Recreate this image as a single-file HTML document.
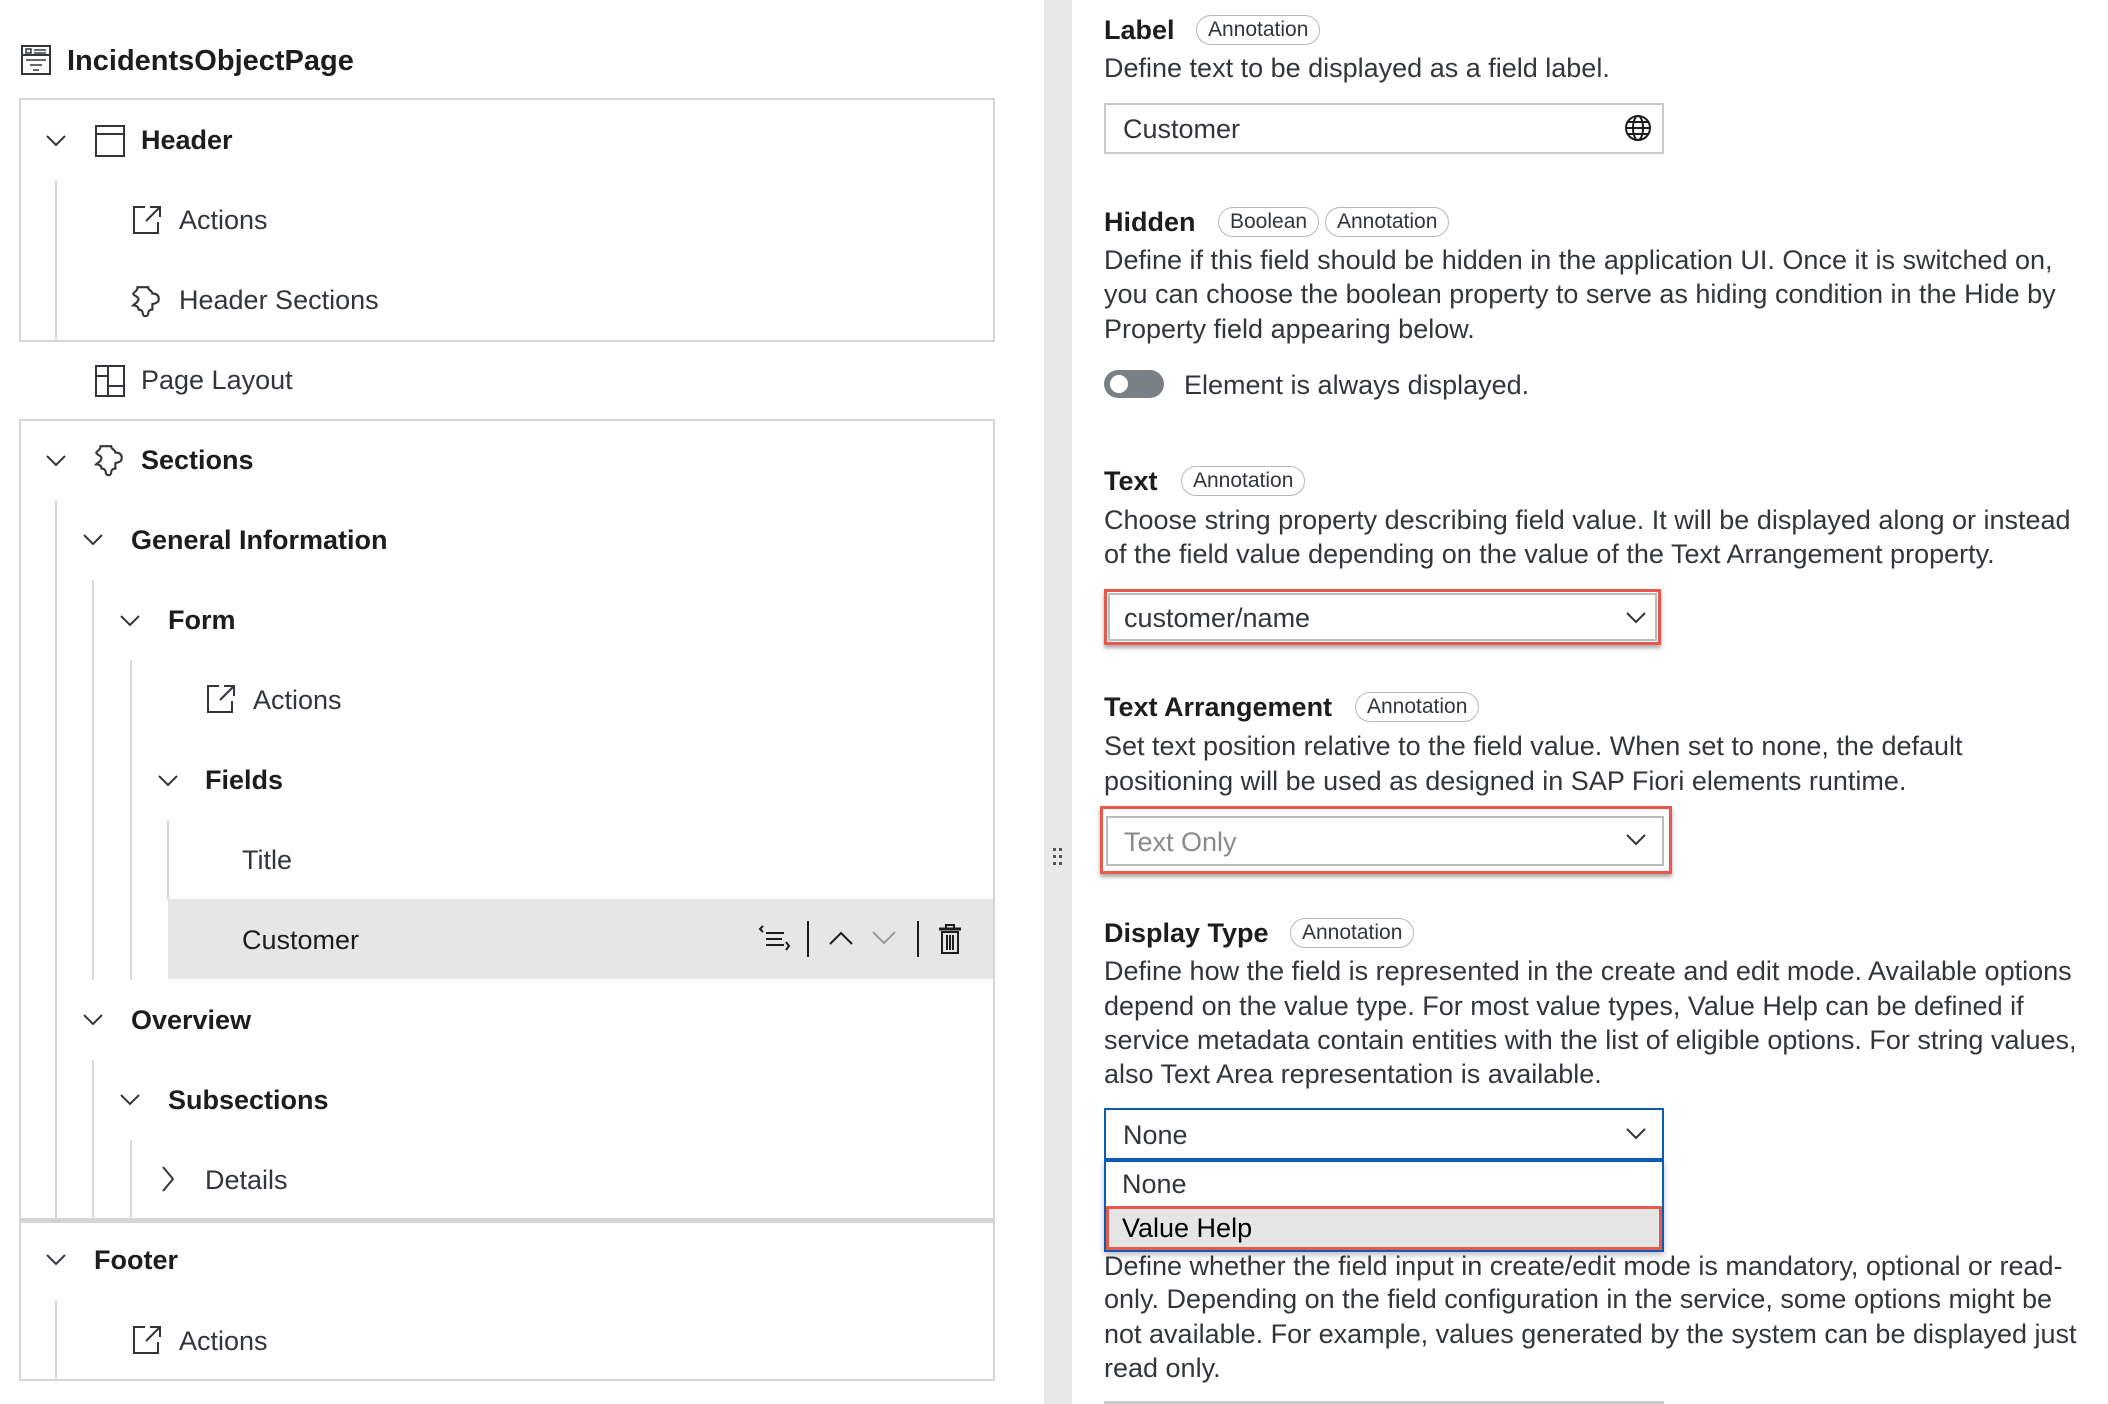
<!DOCTYPE html>
<html><head><meta charset="utf-8"><style>
*{margin:0;padding:0;box-sizing:border-box}
body{width:2108px;height:1404px;overflow:hidden;background:#fff;font-family:"Liberation Sans",Arial,sans-serif;color:#32363a;position:relative}
.a{position:absolute;white-space:nowrap}
.t{position:absolute;white-space:nowrap;font-size:27px;line-height:40px;height:40px}
.b{font-weight:bold}
.box{position:absolute;border:2px solid #d5d5d5}
.vl{position:absolute;width:2px;background:#d9d9d9}
.chev{position:absolute;width:24px;height:24px}
.h{position:absolute;font-size:27px;font-weight:bold;line-height:34px;color:#1d1d1d}
.pill{position:absolute;border:1.5px solid #b8b8b8;border-radius:15px;font-size:21px;line-height:28px;padding:0 11px;color:#32363a}
.d{position:absolute;font-size:27px;line-height:34px;color:#32363a;white-space:nowrap}
.inp{position:absolute;border:2px solid #c9c9c9;background:#fff;font-size:27px;line-height:48px;padding-left:17px}
.red{position:absolute;border:3px solid #e8584d;box-shadow:0 3px 4px rgba(0,0,0,.35)}
</style></head><body>

<svg class="a" style="left:20px;top:44px" width="32" height="32" viewBox="0 0 32 32" fill="none" stroke="#32363a" stroke-width="2"><rect x="2" y="2" width="28" height="28"/><line x1="2" y1="11" x2="30" y2="11"/><rect x="6" y="5" width="5" height="4" stroke-width="1.5"/><line x1="14" y1="6" x2="26" y2="6" stroke-width="1.5"/><line x1="14" y1="9" x2="26" y2="9" stroke-width="1.5"/><line x1="6" y1="16" x2="26" y2="16" stroke-width="1.5"/><line x1="10" y1="21" x2="22" y2="21" stroke-width="1.5"/><line x1="13" y1="26" x2="19" y2="26" stroke-width="1.5"/></svg>
<div class="t b" style="left:67px;top:41px;font-size:29px;color:#1d1d1d">IncidentsObjectPage</div>

<div class="box" style="left:19px;top:98px;width:976px;height:244px"></div>
<div class="box" style="left:19px;top:419px;width:976px;height:801px"></div>
<div class="box" style="left:19px;top:1219px;width:976px;height:162px;border-top-width:4px"></div>

<div class="a" style="left:168px;top:899px;width:825px;height:80px;background:#e6e6e6"></div>

<div class="vl" style="left:55px;top:180px;height:160px"></div>
<div class="vl" style="left:55px;top:500px;height:719px"></div>
<div class="vl" style="left:92px;top:580px;height:400px"></div>
<div class="vl" style="left:130px;top:660px;height:320px"></div>
<div class="vl" style="left:167px;top:820px;height:80px"></div>
<div class="vl" style="left:92px;top:1060px;height:159px"></div>
<div class="vl" style="left:130px;top:1140px;height:79px"></div>
<div class="vl" style="left:55px;top:1300px;height:80px"></div>

<svg width="0" height="0" style="position:absolute"><defs>
<symbol id="cd" viewBox="0 0 24 24"><path d="M3 8 L12 17 L21 8" fill="none" stroke="#32363a" stroke-width="2"/></symbol>
<symbol id="act" viewBox="0 0 32 32"><path d="M14 3 H3 V29 H27 V18 M19 3 H29 V13 M29 3 L15 17" fill="none" stroke="#32363a" stroke-width="2"/></symbol>
<symbol id="puz" viewBox="0 0 32 32"><path d="M8 3 H18 C18 6 22 6 22 9 C25 9 28 10 28 14 C28 18 25 18 22 19 V24 C19 24 18 26 18 28 C18 31 13 31 13 28 C13 26 12 24 9 24 C9 21 6 20 4 20 C6 18 9 17 9 14 C9 12 4 11 4 9 C5 7 8 7 8 3 Z" fill="none" stroke="#32363a" stroke-width="2"/></symbol>
</defs></svg>

<svg class="chev" style="left:44px;top:128px"><use href="#cd"/></svg>
<svg class="a" style="left:94px;top:124px" width="32" height="34" viewBox="0 0 32 34" fill="none" stroke="#32363a" stroke-width="2"><rect x="2" y="2" width="28" height="30"/><line x1="2" y1="10" x2="30" y2="10"/></svg>
<div class="t b" style="left:141px;top:120px;color:#1d1d1d">Header</div>
<svg class="a" style="left:131px;top:204px" width="32" height="32"><use href="#act"/></svg>
<div class="t" style="left:179px;top:200px">Actions</div>
<svg class="a" style="left:129px;top:284px" width="34" height="34"><use href="#puz"/></svg>
<div class="t" style="left:179px;top:280px">Header Sections</div>

<svg class="a" style="left:94px;top:364px" width="32" height="34" viewBox="0 0 32 34" fill="none" stroke="#32363a" stroke-width="2"><rect x="2" y="2" width="28" height="30"/><line x1="14" y1="2" x2="14" y2="32"/><line x1="2" y1="12" x2="14" y2="12"/><line x1="14" y1="22" x2="30" y2="22"/></svg>
<div class="t" style="left:141px;top:360px">Page Layout</div>

<svg class="chev" style="left:44px;top:448px"><use href="#cd"/></svg>
<svg class="a" style="left:92px;top:443px" width="34" height="34"><use href="#puz"/></svg>
<div class="t b" style="left:141px;top:440px;color:#1d1d1d">Sections</div>

<svg class="chev" style="left:81px;top:527px"><use href="#cd"/></svg>
<div class="t b" style="left:131px;top:520px;color:#1d1d1d">General Information</div>

<svg class="chev" style="left:118px;top:608px"><use href="#cd"/></svg>
<div class="t b" style="left:168px;top:600px;color:#1d1d1d">Form</div>

<svg class="a" style="left:205px;top:683px" width="32" height="32"><use href="#act"/></svg>
<div class="t" style="left:253px;top:680px">Actions</div>

<svg class="chev" style="left:156px;top:768px"><use href="#cd"/></svg>
<div class="t b" style="left:205px;top:760px;color:#1d1d1d">Fields</div>

<div class="t" style="left:242px;top:840px">Title</div>
<div class="t" style="left:242px;top:920px;color:#1d1d1d">Customer</div>
<svg class="a" style="left:758px;top:924px" width="34" height="30" viewBox="0 0 34 30" fill="none" stroke="#1d1d1d" stroke-width="2"><path d="M5 2 L2 5 L5 8"/><line x1="8" y1="9" x2="26" y2="9"/><line x1="8" y1="15" x2="24" y2="15"/><line x1="8" y1="21" x2="26" y2="21"/><path d="M28 18 L31 22 L28 26"/></svg>
<div class="a" style="left:807px;top:921px;width:2px;height:36px;background:#1d1d1d"></div>
<svg class="a" style="left:828px;top:928px" width="26" height="20" viewBox="0 0 26 20"><path d="M2 16 L13 5 L24 16" fill="none" stroke="#1d1d1d" stroke-width="2"/></svg>
<svg class="a" style="left:871px;top:928px" width="26" height="20" viewBox="0 0 26 20"><path d="M2 4 L13 15 L24 4" fill="none" stroke="#9a9a9a" stroke-width="2"/></svg>
<div class="a" style="left:917px;top:921px;width:2px;height:36px;background:#1d1d1d"></div>
<svg class="a" style="left:937px;top:923px" width="26" height="32" viewBox="0 0 26 32" fill="none" stroke="#1d1d1d" stroke-width="2"><path d="M9 5 V2 H17 V5"/><line x1="2" y1="6" x2="24" y2="6" stroke-width="3"/><rect x="5" y="9" width="16" height="21"/><line x1="10" y1="12" x2="10" y2="27"/><line x1="13" y1="12" x2="13" y2="27"/><line x1="16" y1="12" x2="16" y2="27"/></svg>

<svg class="chev" style="left:81px;top:1007px"><use href="#cd"/></svg>
<div class="t b" style="left:131px;top:1000px;color:#1d1d1d">Overview</div>

<svg class="chev" style="left:118px;top:1087px"><use href="#cd"/></svg>
<div class="t b" style="left:168px;top:1080px;color:#1d1d1d">Subsections</div>

<svg class="a" style="left:158px;top:1165px" width="20" height="28" viewBox="0 0 20 28"><path d="M5 2 L15 14 L5 26" fill="none" stroke="#32363a" stroke-width="2"/></svg>
<div class="t" style="left:205px;top:1160px">Details</div>

<svg class="chev" style="left:44px;top:1247px"><use href="#cd"/></svg>
<div class="t b" style="left:94px;top:1240px;color:#1d1d1d">Footer</div>
<svg class="a" style="left:131px;top:1324px" width="32" height="32"><use href="#act"/></svg>
<div class="t" style="left:179px;top:1321px">Actions</div>

<div class="a" style="left:1044px;top:0;width:28px;height:1404px;background:#e8e8e8"></div>
<svg class="a" style="left:1052px;top:847px" width="12" height="20"><g fill="#555"><rect x="1" y="1" width="3" height="3"/><rect x="7" y="1" width="3" height="3"/><rect x="1" y="8" width="3" height="3"/><rect x="7" y="8" width="3" height="3"/><rect x="1" y="15" width="3" height="3"/><rect x="7" y="15" width="3" height="3"/></g></svg>

<div class="h" style="left:1104px;top:13px">Label</div>
<div class="pill" style="left:1196px;top:15px">Annotation</div>
<div class="d" style="left:1104px;top:51px">Define text to be displayed as a field label.</div>
<div class="inp" style="left:1104px;top:103px;width:560px;height:51px">Customer</div>
<svg class="a" style="left:1623px;top:113px" width="30" height="30" viewBox="0 0 30 30" fill="none" stroke="#1d1d1d" stroke-width="2"><circle cx="15" cy="15" r="12"/><ellipse cx="15" cy="15" rx="5" ry="12"/><line x1="3" y1="15" x2="27" y2="15"/><line x1="5" y1="9" x2="25" y2="9"/><line x1="5" y1="21" x2="25" y2="21"/></svg>

<div class="h" style="left:1104px;top:205px">Hidden</div>
<div class="pill" style="left:1218px;top:207px">Boolean</div>
<div class="pill" style="left:1325px;top:207px">Annotation</div>
<div class="d" style="left:1104px;top:243px">Define if this field should be hidden in the application UI. Once it is switched on,</div>
<div class="d" style="left:1104px;top:277px">you can choose the boolean property to serve as hiding condition in the Hide by</div>
<div class="d" style="left:1104px;top:312px">Property field appearing below.</div>
<div class="a" style="left:1104px;top:370px;width:60px;height:28px;border-radius:14px;background:#7b8087"></div>
<div class="a" style="left:1110px;top:375px;width:18px;height:18px;border-radius:9px;background:#fff"></div>
<div class="d" style="left:1184px;top:368px">Element is always displayed.</div>

<div class="h" style="left:1104px;top:464px">Text</div>
<div class="pill" style="left:1181px;top:466px">Annotation</div>
<div class="d" style="left:1104px;top:503px">Choose string property describing field value. It will be displayed along or instead</div>
<div class="d" style="left:1104px;top:537px">of the field value depending on the value of the Text Arrangement property.</div>
<div class="red" style="left:1104px;top:589px;width:557px;height:56px"></div>
<div class="inp" style="left:1108px;top:593px;width:549px;height:48px;border-color:#bbb;line-height:46px;padding-left:14px">customer/name</div>
<svg class="a" style="left:1624px;top:605px" width="24" height="24"><use href="#cd"/></svg>

<div class="h" style="left:1104px;top:690px">Text Arrangement</div>
<div class="pill" style="left:1355px;top:692px">Annotation</div>
<div class="d" style="left:1104px;top:729px">Set text position relative to the field value. When set to none, the default</div>
<div class="d" style="left:1104px;top:764px">positioning will be used as designed in SAP Fiori elements runtime.</div>
<div class="red" style="left:1100px;top:806px;width:572px;height:68px"></div>
<div class="inp" style="left:1106px;top:816px;width:558px;height:50px;border-color:#bbb;color:#8a8a8a;padding-left:16px">Text Only</div>
<svg class="a" style="left:1624px;top:827px" width="24" height="24"><use href="#cd"/></svg>

<div class="h" style="left:1104px;top:916px">Display Type</div>
<div class="pill" style="left:1290px;top:918px">Annotation</div>
<div class="d" style="left:1104px;top:954px">Define how the field is represented in the create and edit mode. Available options</div>
<div class="d" style="left:1104px;top:989px">depend on the value type. For most value types, Value Help can be defined if</div>
<div class="d" style="left:1104px;top:1023px">service metadata contain entities with the list of eligible options. For string values,</div>
<div class="d" style="left:1104px;top:1057px">also Text Area representation is available.</div>

<div class="d" style="left:1104px;top:1249px">Define whether the field input in create/edit mode is mandatory, optional or read-</div>
<div class="d" style="left:1104px;top:1282px">only. Depending on the field configuration in the service, some options might be</div>
<div class="d" style="left:1104px;top:1317px">not available. For example, values generated by the system can be displayed just</div>
<div class="d" style="left:1104px;top:1351px">read only.</div>
<div class="a" style="left:1104px;top:1401px;width:560px;height:3px;background:#c9c9c9"></div>

<div class="inp" style="left:1104px;top:1108px;width:560px;height:52px;border-color:#0a5fb4;line-height:50px">None</div>
<svg class="a" style="left:1624px;top:1121px" width="24" height="24"><use href="#cd"/></svg>
<div class="a" style="left:1104px;top:1159px;width:560px;height:93px;background:#fff;border:2px solid #0a5fb4;border-top-width:3px;box-shadow:0 3px 6px rgba(0,0,0,.25)"></div>
<div class="a" style="left:1122px;top:1166px;font-size:27px;line-height:36px">None</div>
<div class="a" style="left:1106px;top:1206px;width:556px;height:44px;background:#e5e5e5;border:3px solid #e8584d"></div>
<div class="a" style="left:1122px;top:1209px;font-size:27px;line-height:38px;color:#000">Value Help</div>

</body></html>
